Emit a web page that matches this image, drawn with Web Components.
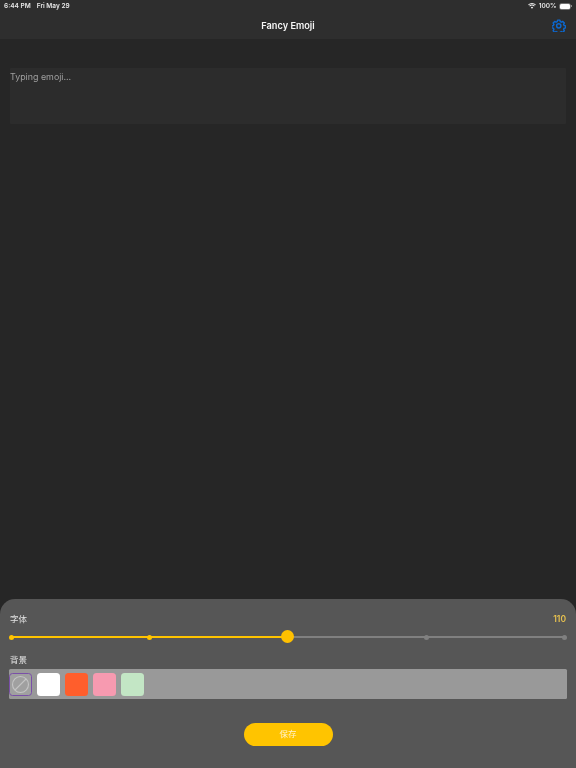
<!DOCTYPE html>
<html><head><meta charset="utf-8">
<style>html,body{margin:0;padding:0;background:#262626}</style></head>
<body>
<fancy-app></fancy-app>
<script>
const FONT = `"Inter","Liberation Sans","Noto Sans CJK SC",sans-serif`;
const SOFT = `filter:blur(.2px);`;
function def(name, css, html){
  customElements.define(name, class extends HTMLElement{
    constructor(){super();const r=this.attachShadow({mode:'open'});r.innerHTML=`<style>${css}</style>${html}`;}
  });
}
def('status-bar',`
:host{display:flex;align-items:center;justify-content:space-between;height:12px;padding:0 4px;font:600 6.5px/12px ${FONT};color:#e8e8e8}
.l{display:flex;gap:6px;${SOFT}}.r{display:flex;align-items:center;gap:2px;${SOFT}}
.bat{display:block;width:10.5px;height:5px;background:#fff;border-radius:1.5px;box-shadow:0 0 0 .7px #888;margin-left:1px}
.tip{width:1px;height:2.5px;background:#888;margin-left:-1px;}
svg{display:block}
`,`<div class="l"><span>6:44 PM</span><span>Fri May 29</span></div>
<div class="r"><svg width="8" height="6" viewBox="0 0 18 14"><path d="M9 13.5 6.2 10.4a4 4 0 0 1 5.6 0zM4.3 8.4 2.6 6.6a9.2 9.2 0 0 1 12.8 0l-1.7 1.8a6.7 6.7 0 0 0-9.4 0zM1.4 5.3 0 3.7a13 13 0 0 1 18 0l-1.4 1.6a11 11 0 0 0-15.2 0z" fill="#eee"/></svg><span style="margin-left:1px">100%</span><span class="bat"></span><span class="tip"></span></div>`);
def('nav-bar',`
:host{display:block;background:#2e2e2e;height:39px}
.row{position:relative;display:flex;align-items:center;justify-content:center;height:27px;}
.t{font:600 9.2px/27px ${FONT};color:#f6f6f6;${SOFT}}
.a{position:absolute;right:10.5px;top:6.5px;display:block}
`,`<status-bar></status-bar><div class="row"><span class="t"><slot></slot></span>
<svg class="a" width="13.5" height="13.5" viewBox="0 0 24 24" fill="none" stroke="#0c68d0" stroke-width="2.5" stroke-linejoin="round"><path d="M10 2h4l.7 2.8 2 .9 2.5-1.4 2.8 2.8-1.4 2.5.9 2 2.8.7v3.4l-2.8.7-.9 2 1.4 2.5-2.8 2.8-2.5-1.4-2 .9-.7 2.8h-4l-.7-2.8-2-.9-2.5 1.4-2.8-2.8 1.4-2.5-.9-2-2.8-.7v-3.4l2.8-.7.9-2-1.4-2.5 2.8-2.8 2.5 1.4 2-.9z"/><circle cx="12" cy="12.2" r="3.8"/></svg></div>`);
def('emoji-input',`
:host{display:block;margin:29px 10px 0;height:56px;background:#2c2c2c;border-radius:1px;box-sizing:border-box;padding:3px 0 0 0;font:400 8.9px/12px ${FONT};color:#a0a0a0}
span{display:block;${SOFT}}
`,`<span><slot></slot></span>`);
def('size-slider',`
:host{display:block;height:12px;position:relative;margin:0 10px}
.track{position:absolute;left:1.5px;right:1.7px;top:6px;height:2px;background:#808080;border-radius:1px}
.fill{position:absolute;left:1.5px;width:276px;top:6px;height:2px;background:#ffc400;border-radius:1px}
.d{position:absolute;top:4.5px;width:5px;height:5px;border-radius:50%;margin-left:-2.5px}
.thumb{position:absolute;left:277.5px;top:0;width:13px;height:13px;margin-left:-6.5px;border-radius:50%;background:#ffc000}
`,`<div class="track"></div><div class="fill"></div>
<i class="d" style="left:1.5px;background:#ffc400"></i><i class="d" style="left:139.8px;background:#ffc400"></i>
<i class="d" style="left:416px;background:#808080"></i><i class="d" style="left:554.3px;background:#808080"></i><div class="thumb"></div>`);
def('color-swatch',`
:host{display:block;width:23px;height:23px;border-radius:3.5px;background:var(--c,#fff);box-sizing:border-box}
:host([none]){background:#a0a0a0;border:1px solid #7a4fa8}
svg{display:block;width:100%;height:100%}
`,`<slot></slot>`);
def('swatch-row',`
:host{display:flex;align-items:center;gap:5px;height:30px;box-sizing:border-box;padding-top:1px;margin:0 9px;background:#999;border-radius:1.5px}
`,`<slot></slot>`);
def('save-button',`
:host{display:flex;align-items:center;justify-content:center;width:89px;height:23px;border-radius:12px;background:#ffc400;color:#fff3cf;font:400 8.5px/23px ${FONT}}
span{${SOFT}}
`,`<span><slot></slot></span>`);
def('bottom-sheet',`
:host{display:block;background:#565656;border-radius:15px 15px 0 0;height:169px;box-sizing:border-box;padding-top:14px}
.head{display:flex;justify-content:space-between;margin:0 10px;font:400 8.5px/12px ${FONT};color:#e2e2e2;height:12px;${SOFT}}
.v{color:#e8c24f;font-weight:600}
.slide{margin-top:5px}
.bg{margin-top:12px;margin-bottom:3px}
.save{display:flex;justify-content:center;margin-top:24px}
`,`<div class="head"><span>字体</span><span class="v">110</span></div>
<size-slider class="slide"></size-slider>
<div class="head bg"><span>背景</span></div>
<swatch-row><slot></slot></swatch-row>
<div class="save"><save-button>保存</save-button></div>`);
def('fancy-app',`
:host{display:flex;flex-direction:column;width:576px;height:768px;background:#262626;overflow:hidden}
bottom-sheet{margin-top:auto}
`,`<nav-bar>Fancy Emoji</nav-bar><emoji-input>Typing emoji...</emoji-input>
<bottom-sheet>
<color-swatch none><svg viewBox="0 0 21 21" fill="none" stroke="#c4c4c4" stroke-width="1.1"><circle cx="10.5" cy="10.5" r="8"/><path d="M5 16 16 5"/></svg></color-swatch>
<color-swatch style="--c:#fff"></color-swatch>
<color-swatch style="--c:#ff5e2c"></color-swatch>
<color-swatch style="--c:#f79ab0"></color-swatch>
<color-swatch style="--c:#c3e6c5"></color-swatch>
</bottom-sheet>`);
</script>
</body></html>
